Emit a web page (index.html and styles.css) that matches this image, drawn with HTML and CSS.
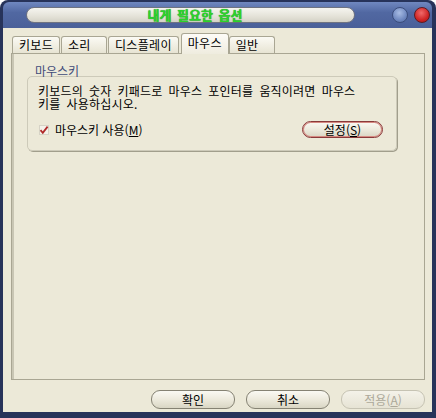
FILE: index.html
```html
<!DOCTYPE html>
<html lang="ko">
<head>
    <meta charset="UTF-8">
    <title>내게 필요한 옵션</title>
    <link rel="stylesheet" href="styles.css">
</head>
<body>
    <div class="window">
        <div class="titlebar">
            <div class="title-pill"><span class="title-text">내게 필요한 옵션</span></div>
            <div class="title-buttons">
                <span class="tbtn tbtn-help"></span>
                <span class="tbtn tbtn-close"></span>
            </div>
        </div>

        <div class="client">
            <div class="tabs">
                <div class="tab">키보드</div>
                <div class="tab">소리</div>
                <div class="tab">디스플레이</div>
                <div class="tab active">마우스</div>
                <div class="tab">일반</div>
            </div>

            <div class="panel">
                <div class="group-label">마우스키</div>
                <div class="group">
                    <p class="desc">키보드의 숫자 키패드로 마우스 포인터를 움직이려면 마우스<br>키를 사용하십시오.</p>
                    <div class="group-row">
                        <label class="check">
                            <svg width="10" height="10" viewBox="0 0 10 10">
                                <rect x="0.5" y="0.5" width="9" height="9" fill="#f4f2ea" stroke="#d6d3c6"/>
                                <path d="M1.5 5.2 L3.8 7.8 L8.6 1.6" fill="none" stroke="#b02a2a" stroke-width="1.8"/>
                            </svg>
                            <span>마우스키 사용(<u>M</u>)</span>
                        </label>
                        <button class="btn btn-focus">설정(<u>S</u>)</button>
                    </div>
                </div>
            </div>

            <div class="actions">
                <button class="btn">확인</button>
                <button class="btn">취소</button>
                <button class="btn" disabled>적용(<u>A</u>)</button>
            </div>
        </div>
    </div>
</body>
</html>
```

FILE: styles.css
```css
body {
    margin: 0;
    background: #fff;
    font-family: "Noto Sans CJK KR", sans-serif;
    font-size: 12px;
    color: #000;
}

.window {
    width: 436px;
    height: 418px;
    box-sizing: border-box;
    padding: 0 4px 6px 3px;
    background: #27335a;
    border-radius: 8px 8px 0 0;
    display: flex;
    flex-direction: column;
}

.titlebar {
    height: 26px;
    margin-top: 2px;
    padding: 0 2px 0 23px;
    border-radius: 6px 6px 0 0;
    background: linear-gradient(#7088c0, #5168a2 40%, #4a6099);
    display: flex;
    align-items: center;
}

.title-pill {
    width: 329px;
    height: 16px;
    box-sizing: border-box;
    border: 1px solid #6f7382;
    border-radius: 8px;
    background: linear-gradient(#f6f5f0, #e4e2d8 60%, #d4d2c6);
    display: flex;
    align-items: center;
    justify-content: center;
}

.title-text {
    font-size: 13px;
    font-weight: bold;
    line-height: 14px;
    color: #2bd42b;
    text-shadow: 0 0 1px #137313;
    padding-left: 9px;
    word-spacing: 2px;
}

.title-buttons {
    margin-left: auto;
    display: flex;
    gap: 6px;
}

.tbtn {
    width: 16px;
    height: 16px;
    box-sizing: border-box;
    border-radius: 50%;
}

.tbtn-help {
    background: radial-gradient(circle at 45% 35%, #a8bce4, #6f88c0 60%, #52699f);
    border: 1px solid #3b4d7c;
}

.tbtn-close {
    background: radial-gradient(circle at 45% 35%, #f06a6a, #cf2424 60%, #a51414);
    border: 1px solid #5e1a22;
}

.client {
    flex: 1;
    background: #ece9d8;
    padding: 5px 7px 3px 8px;
    display: flex;
    flex-direction: column;
}

.tabs {
    height: 20px;
    padding-left: 1px;
    display: flex;
    align-items: flex-end;
    position: relative;
    z-index: 1;
}

.tab {
    height: 17px;
    min-width: 46px;
    box-sizing: border-box;
    padding: 0 6px;
    margin-right: 1px;
    border: 1px solid #a9a693;
    border-bottom: none;
    border-radius: 3px 3px 0 0;
    background: linear-gradient(#fbfaf4, #e7e4d3);
    line-height: 16px;
    letter-spacing: 0.3px;
}

.tab.active {
    height: 21px;
    min-width: 48px;
    margin: 0 0 -1px 1px;
    background: linear-gradient(#fdfcf7, #efecdf);
    line-height: 17px;
}

.panel {
    flex: 1;
    border: 1px solid #a9a693;
    box-shadow: inset 2px 0 0 #c9c6b4;
    background: #ece9d8;
    padding-top: 11px;
}

.group-label {
    margin-left: 23px;
    line-height: 12px;
    color: #3f4b78;
}

.group {
    margin: -1px 27px 0 15px;
    padding: 7px 13px 12px 10px;
    border: 1px solid #cdcab9;
    border-radius: 5px;
    box-shadow: 1px 1px 0 #a19e8c;
}

.desc {
    margin: 0;
    line-height: 13px;
    word-spacing: 2.5px;
    letter-spacing: 0.2px;
}

.group-row {
    margin-top: 11px;
    display: flex;
    align-items: center;
    justify-content: space-between;
}

.check {
    display: flex;
    align-items: center;
    gap: 6px;
    padding-left: 1px;
}

.check svg {
    display: block;
}

.btn {
    width: 84px;
    height: 19px;
    padding: 0;
    border: 1px solid #858273;
    border-radius: 9px;
    background: linear-gradient(#faf9f3, #ebe8da 55%, #d9d6c4);
    font-family: inherit;
    font-size: 12px;
    line-height: 16px;
    color: #000;
}

.btn-focus {
    width: 81px;
    height: 17px;
    border-color: #8a3a3a;
    box-shadow: inset 0 0 0 1px #d68a82;
    line-height: 14px;
}

.btn:disabled {
    border-color: #c6c3b3;
    background: linear-gradient(#f4f2e9, #e6e3d4);
    color: #aca899;
}

.actions {
    margin-top: 10px;
    display: flex;
    justify-content: flex-end;
    gap: 11px;
}
```
